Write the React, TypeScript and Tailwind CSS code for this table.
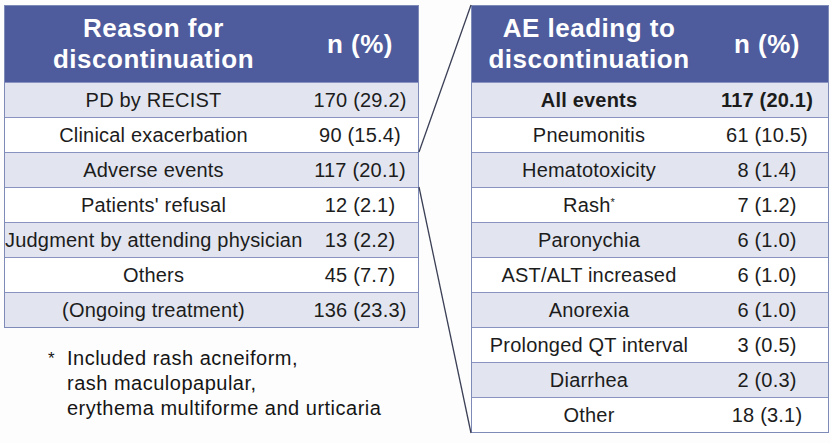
const left = [
  ["PD by RECIST", "170 (29.2)"],
  ["Clinical exacerbation", "90 (15.4)"],
  ["Adverse events", "117 (20.1)"],
  ["Patients' refusal", "12 (2.1)"],
  ["Judgment by attending physician", "13 (2.2)"],
  ["Others", "45 (7.7)"],
  ["(Ongoing treatment)", "136 (23.3)"],
];

const right = [
  ["All events", "117 (20.1)"],
  ["Pneumonitis", "61 (10.5)"],
  ["Hematotoxicity", "8 (1.4)"],
  ["Rash*", "7 (1.2)"],
  ["Paronychia", "6 (1.0)"],
  ["AST/ALT increased", "6 (1.0)"],
  ["Anorexia", "6 (1.0)"],
  ["Prolonged QT interval", "3 (0.5)"],
  ["Diarrhea", "2 (0.3)"],
  ["Other", "18 (3.1)"],
];

function Row({
  label,
  value,
  shade,
  bold,
  labelW,
}: {
  label: string;
  value: string;
  shade: boolean;
  bold?: boolean;
  labelW: string;
}) {
  return (
    <div
      className={`flex h-[35px] items-center border-t border-[#8893c0] text-[20px] tracking-[0.2px] text-[#1c1c1c] ${
        shade ? "bg-[#e2e5ef]" : "bg-white"
      } ${bold ? "font-bold" : ""}`}
    >
      <div className={`${labelW} shrink-0 text-center whitespace-nowrap`}>
        {label === "Rash*" ? (
          <>
            Rash<sup className="text-[11px] -top-[6px]">*</sup>
          </>
        ) : (
          label
        )}
      </div>
      <div className="flex-1 text-center whitespace-nowrap">{value}</div>
    </div>
  );
}

export default function App() {
  return (
    <div
      className="relative w-[831px] h-[443px] bg-[#fdfdfd] overflow-hidden"
      style={{ fontFamily: '"Liberation Sans", Arial, sans-serif' }}
    >
      <div className="flex pt-[5px] pl-[4px] gap-[52px]">
        <div className="w-[415px] flex flex-col">
          <div className="border border-[#7e8ab8]">
            <div className="flex h-[76px] items-center bg-[#4e5b9c] text-white font-bold text-[26px] leading-[31px] tracking-[0.5px]">
              <div className="w-[297px] shrink-0 text-center">
                Reason for
                <br />
                discontinuation
              </div>
              <div className="flex-1 text-center">n (%)</div>
            </div>
            {left.map(([l, v], i) => (
              <Row key={l} label={l} value={v} shade={i % 2 === 0} labelW="w-[297px]" />
            ))}
          </div>
          <div className="mt-[18px] ml-[44px] text-[20px] leading-[25px] text-[#151515] tracking-[0.5px]">
            <div className="flex">
              <span className="w-[19px] text-[17px]">*</span>
              <span>Included rash acneiform,</span>
            </div>
            <div className="pl-[19px]">rash maculopapular,</div>
            <div className="pl-[19px]">erythema multiforme and urticaria</div>
          </div>
        </div>

        <div className="w-[358px] border border-[#7e8ab8]">
          <div className="flex h-[76px] items-center bg-[#4e5b9c] text-white font-bold text-[26px] leading-[31px] tracking-[0.5px]">
            <div className="w-[234px] shrink-0 text-center">
              AE leading to
              <br />
              discontinuation
            </div>
            <div className="flex-1 text-center">n (%)</div>
          </div>
          {right.map(([l, v], i) => (
            <Row
              key={l}
              label={l}
              value={v}
              shade={i % 2 === 0}
              bold={i === 0}
              labelW="w-[234px]"
            />
          ))}
        </div>
      </div>

      <svg className="absolute inset-0 pointer-events-none" width="831" height="443">
        <line x1="419" y1="152" x2="471" y2="5" stroke="#3a3f55" strokeWidth="1.3" />
        <line x1="419" y1="187" x2="471" y2="433" stroke="#3a3f55" strokeWidth="1.3" />
      </svg>
    </div>
  );
}
